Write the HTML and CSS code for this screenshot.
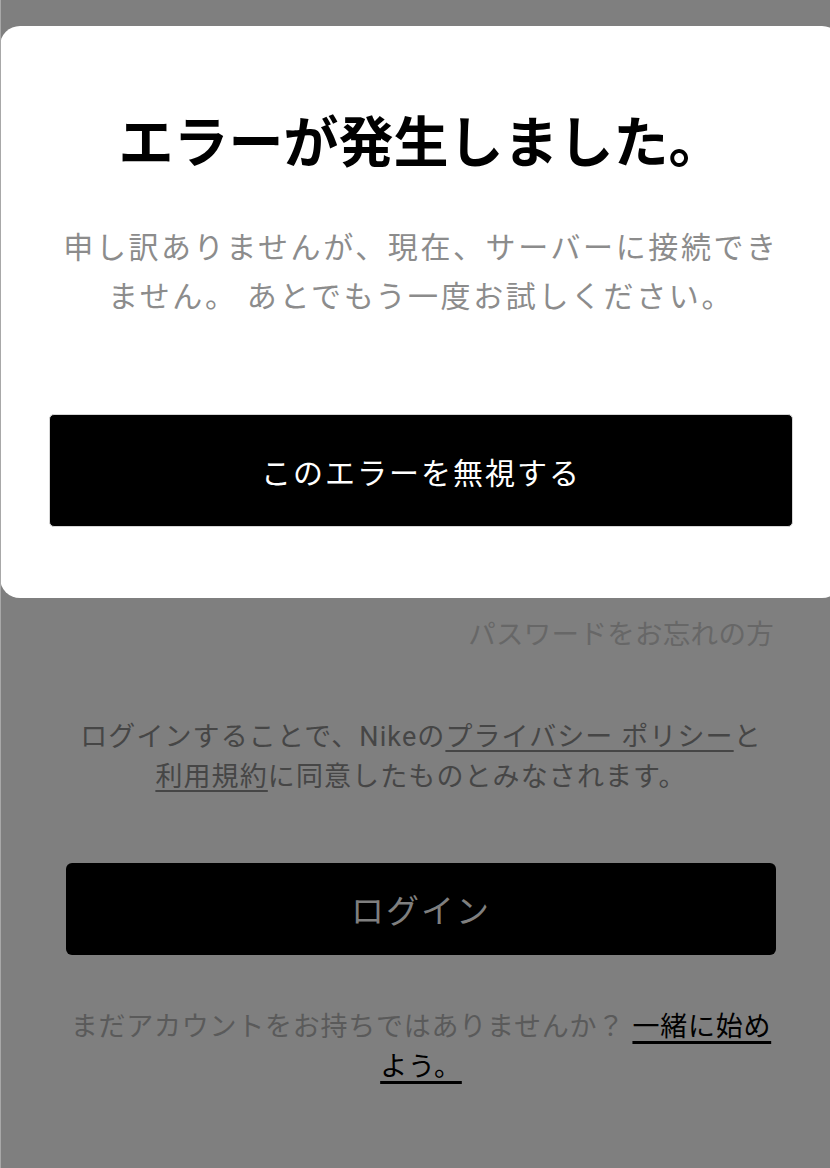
FILE: index.html
```html
<!DOCTYPE html>
<html lang="ja">
<head>
<meta charset="utf-8">
<title>エラー</title>
<link rel="stylesheet" href="styles.css">
</head>
<body>
<div class="viewport">
  <main class="login">
    <p class="forgot">パスワードをお忘れの方</p>
    <p class="policy">
      <span class="line">ログインすることで、Nikeの<a class="ulink">プライバシー ポリシー</a>と</span>
      <span class="line"><a class="ulink">利用規約</a>に同意したものとみなされます。</span>
    </p>
    <button class="login-btn" type="button">ログイン</button>
    <p class="signup">
      <span class="line">まだアカウントをお持ちではありませんか？ <a class="join">一緒に始め</a></span>
      <span class="line"><a class="join">よう。</a></span>
    </p>
  </main>

  <section class="modal" role="dialog">
    <h1 class="modal-title">エラーが発生しました。</h1>
    <p class="modal-text">申し訳ありませんが、現在、サーバーに接続でき<br>ません。 あとでもう一度お試しください。</p>
    <button class="dismiss" type="button">このエラーを無視する</button>
  </section>
</div>
<div class="edge"></div>
</body>
</html>
```

FILE: styles.css
```css
html, body {
  margin: 0;
  padding: 0;
}
body {
  background: #7f7f7f;
  overflow: hidden;
  font-family: "Roboto", "Noto Sans CJK JP", sans-serif;
  height: 1168px;
}
.viewport {
  position: relative;
  width: 842px;
  height: 1168px;
}
.login {
  padding: 610px 66px 0;
  display: flex;
  flex-direction: column;
}
.forgot {
  margin: 0;
  text-align: right;
  font-size: 27.5px;
  letter-spacing: 0.3px;
  line-height: 50px;
  color: #676767;
  padding-right: 2px;
}
.policy {
  margin: 57px 0 0;
  text-align: center;
  font-size: 27px;
  letter-spacing: 1.1px;
  line-height: 40px;
  color: #464646;
}
.line {
  display: block;
  white-space: nowrap;
}
.ulink {
  color: #464646;
  text-decoration: underline;
  text-decoration-thickness: 2px;
  text-underline-offset: 4px;
}
.login-btn {
  margin-top: 66px;
  height: 92px;
  width: 100%;
  background: #000;
  border: none;
  border-radius: 6px;
  color: #7f7f7f;
  font-family: "Noto Sans CJK JP", sans-serif;
  font-size: 33px;
  letter-spacing: 2px;
}
.signup {
  margin: 52px 0 0;
  text-align: center;
  font-size: 27px;
  letter-spacing: 0.75px;
  line-height: 40px;
  color: #5a5a5a;
}
.join {
  color: #000;
  text-decoration: underline;
  text-decoration-thickness: 2.5px;
  text-underline-offset: 5px;
}
.modal {
  position: absolute;
  top: 26px;
  left: 0;
  width: 842px;
  box-sizing: border-box;
  background: #fff;
  border-radius: 20px;
  padding: 77px 49px 71px;
  display: flex;
  flex-direction: column;
  align-items: stretch;
}
.modal-title {
  margin: 0;
  text-align: center;
  font-family: "Noto Sans CJK JP", sans-serif;
  font-weight: 700;
  font-size: 55px;
  line-height: 70px;
  color: #000;
}
.modal-text {
  margin: 48px 0 0;
  text-align: center;
  font-family: "Noto Sans CJK JP", sans-serif;
  font-size: 30px;
  letter-spacing: 2.6px;
  line-height: 49px;
  color: #8c8c8c;
}
.dismiss {
  margin-top: 95px;
  height: 113px;
  background: #000;
  border: 1px solid #d6d6d6;
  border-radius: 5px;
  color: #fff;
  font-family: "Noto Sans CJK JP", sans-serif;
  font-size: 30px;
  letter-spacing: 2px;
}
.edge {
  position: fixed;
  left: 0;
  top: 0;
  width: 1px;
  height: 100%;
  background: #a8a8a8;
}
```
